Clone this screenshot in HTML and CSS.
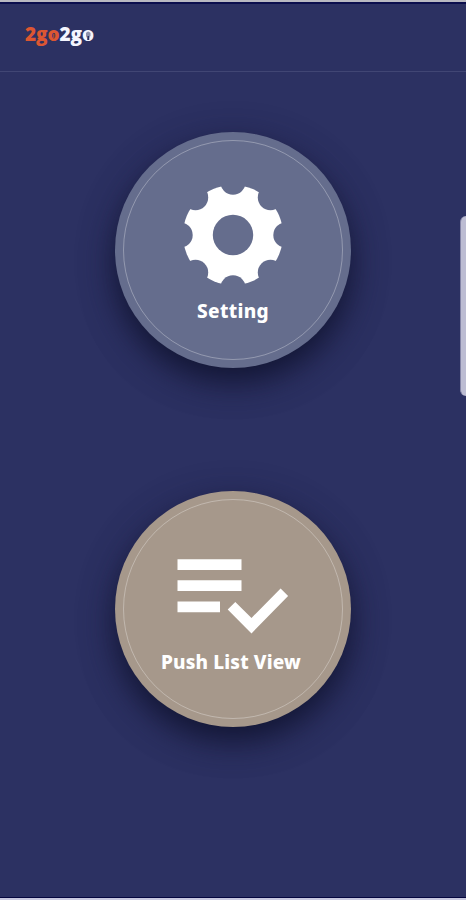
FILE: index.html
```html
<!DOCTYPE html>
<html lang="en">
<head>
    <meta charset="UTF-8">
    <meta name="viewport" content="width=device-width, initial-scale=1.0">
    <title>2go2go</title>
    <link rel="stylesheet" href="styles.css">
</head>
<body>
    <div class="screen">
        <header class="header">
            <div class="logo">
                <span class="logo-orange">2go</span><span class="logo-white">2go</span>
                <svg class="logo-mark" width="70" height="22" viewBox="0 0 70 22">
                    <path d="M28 16v-5q1-1 1.500 0v5z" fill="#a74934"/>
                    <path d="M61 10q2-3 4.500 0v3l-1 1v3h-2.500v-3l-1-1z" fill="#8c91ad"/>
                    <path d="M62.500 13h1.500v4h-1.500z" fill="#2d3163"/>
                </svg>
            </div>
        </header>

        <main class="menu">
            <button class="menu-btn btn-setting">
                <svg class="icon-gear" width="100" height="100" viewBox="0 0 100 100">
                    <mask id="notches">
                        <rect width="100" height="100" fill="white"/>
                        <circle cx="50" cy="50" r="20.200"/>
                        <circle cx="50" cy="-3" r="12.700"/>
                        <circle cx="87.500" cy="12.500" r="12.700"/>
                        <circle cx="103" cy="50" r="12.700"/>
                        <circle cx="87.500" cy="87.500" r="12.700"/>
                        <circle cx="50" cy="103" r="12.700"/>
                        <circle cx="12.500" cy="87.500" r="12.700"/>
                        <circle cx="-3" cy="50" r="12.700"/>
                        <circle cx="12.500" cy="12.500" r="12.700"/>
                    </mask>
                    <circle cx="50" cy="50" r="50" fill="white" mask="url(#notches)"/>
                </svg>
                <span class="label label-setting">Setting</span>
            </button>

            <button class="menu-btn btn-push">
                <svg class="icon-list" width="112" height="76" viewBox="0 0 112 76" fill="white">
                    <path d="M.500 1.300h64V12h-64zM.500 22.300h64V33h-64zM.500 43.500H43v10.700H.500z"/>
                    <path d="M50.700 51.500l7.600-7.600 16.200 16L103.600 30.600l7.500 7.500-36.600 37.300z"/>
                </svg>
                <span class="label label-push">Push List View</span>
            </button>
        </main>

        <div class="edge-handle"></div>
    </div>
</body>
</html>
```
FILE: styles.css
```css
* {
    margin: 0;
    padding: 0;
    box-sizing: border-box;
}

body {
    background: #2c3162;
    font-family: 'Noto Sans', sans-serif;
}

.screen {
    position: relative;
    height: 900px;
    overflow: hidden;
    border-top: 2px solid #b9b9c1;
    border-bottom: 2px solid #c9c9e0;
    box-shadow: inset 0 2px 0 #0b0e4d, inset 0 -1px 0 #05063f;
}

.header {
    height: 70px;
    padding: 21px 25px;
    border-bottom: 1px solid #414674;
}

.logo {
    position: relative;
    width: 70px;
    font-family: 'Open Sans', sans-serif;
    font-size: 19px;
    font-weight: 800;
    letter-spacing: -0.1px;
    line-height: 22px;
    white-space: nowrap;
}

.logo-orange {
    color: #dc5632;
}

.logo-white {
    color: #f4f5ff;
}

.logo-mark {
    position: absolute;
    top: 0;
    left: 0;
}

.menu {
    display: flex;
    flex-direction: column;
    align-items: center;
    gap: 123px;
    padding-top: 59.5px;
}

.menu-btn {
    position: relative;
    display: flex;
    flex-direction: column;
    align-items: center;
    width: 236px;
    height: 236px;
    border: none;
    border-radius: 50%;
    color: white;
    font-family: inherit;
    cursor: pointer;
    box-shadow: 0 14px 32px rgba(16, 20, 48, 0.95), 0 10px 40px rgba(50, 44, 94, 0.3);
}

/* thin ring inside the button edge */
.menu-btn::before {
    content: "";
    position: absolute;
    inset: 8px;
    border: 1px solid rgba(255, 255, 255, 0.3);
    border-radius: 50%;
}

.btn-setting {
    padding-top: 53px;
    background: #656d8d;
}

.btn-push {
    padding-top: 67px;
    background: #a6988b;
}

.icon-list {
    display: block;
}

.label {
    font-size: 19px;
    font-weight: 800;
    line-height: 26px;
    white-space: nowrap;
}

.label-setting {
    margin-top: 13.5px;
    letter-spacing: 0.3px;
}

.label-push {
    margin: 15px 4px 0 0;
    letter-spacing: 0.15px;
}

.edge-handle {
    position: absolute;
    top: 214px;
    right: 0;
    width: 6px;
    height: 180px;
    background: #bcbcd2;
    border-left: 1px solid #8384a6;
    border-radius: 6px 0 0 6px;
}
```
